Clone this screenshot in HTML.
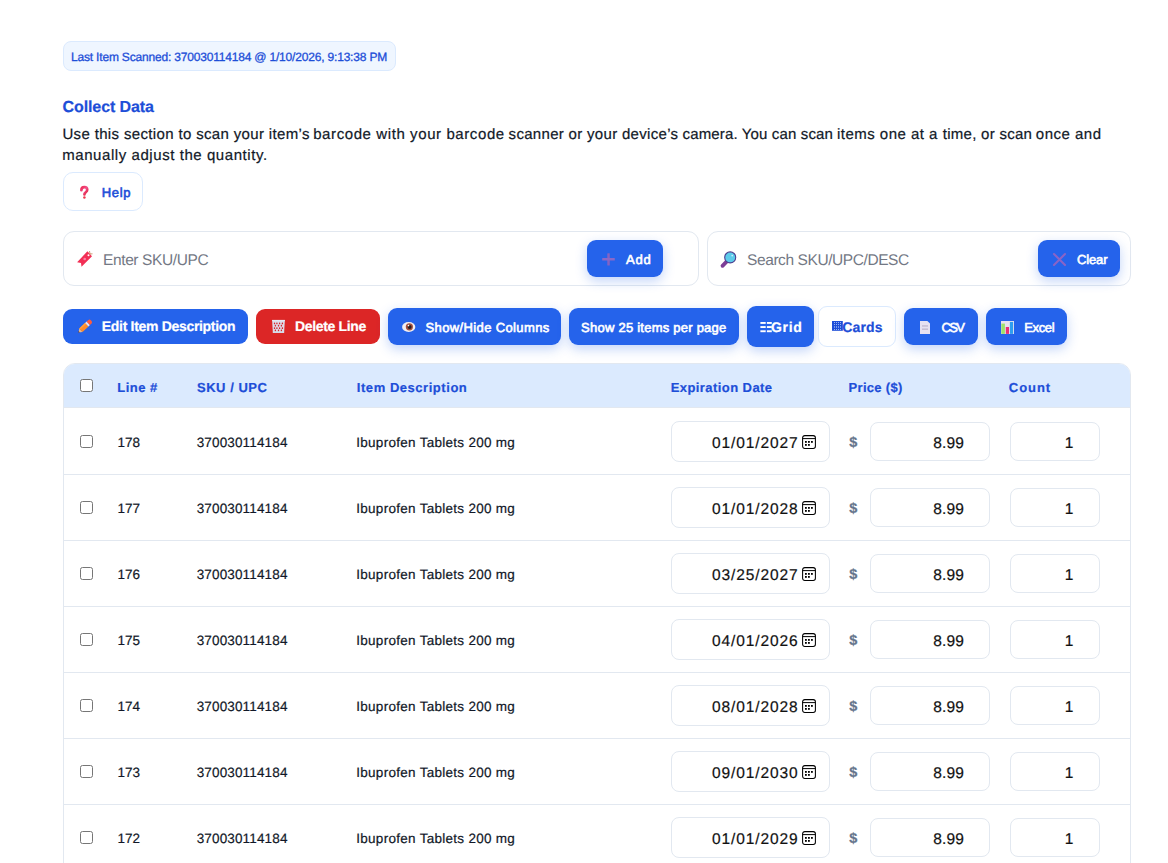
<!DOCTYPE html>
<html><head><meta charset="utf-8"><title>Collect Data</title>
<style>
*{box-sizing:border-box;margin:0;padding:0}
html,body{width:1168px;height:863px;overflow:hidden;background:#fff}
body{font-family:"Liberation Sans",sans-serif;position:relative;text-rendering:geometricPrecision}
.t{position:absolute;white-space:nowrap;line-height:1;-webkit-text-stroke-width:0.2px}
.b{position:absolute}
.i{position:absolute;overflow:visible}
</style></head><body>
<div class="b" style="left:63px;top:41px;width:333px;height:30px;border:1px solid #dbeafe;background:#eff6ff;border-radius:8px"></div>
<div class="t" style="left:71.00px;top:50.84px;font-size:12px;font-weight:normal;-webkit-text-stroke:0.3px #1d4ed8;letter-spacing:-0.185px;color:#1d4ed8;">Last Item Scanned: 370030114184 @ 1/10/2026, 9:13:38 PM</div>
<div class="t" style="left:62.50px;top:100.46px;font-size:16px;font-weight:bold;letter-spacing:-0.091px;color:#1d4ed8;">Collect Data</div>
<div class="t" style="left:62.40px;top:127.30px;font-size:15px;letter-spacing:0.351px;color:#111827">Use this section to scan your item’s</div>
<div class="t" style="left:313.20px;top:127.30px;font-size:15px;letter-spacing:0.592px;color:#111827">barcode with your barcode</div>
<div class="t" style="left:508.60px;top:127.30px;font-size:15px;letter-spacing:0.309px;color:#111827">scanner or your device’s</div>
<div class="t" style="left:682.60px;top:127.30px;font-size:15px;letter-spacing:0.142px;color:#111827">camera. You can scan</div>
<div class="t" style="left:837.00px;top:127.30px;font-size:15px;letter-spacing:0.477px;color:#111827">items one at a</div>
<div class="t" style="left:942.80px;top:127.30px;font-size:15px;letter-spacing:0.275px;color:#111827">time, or scan</div>
<div class="t" style="left:1035.80px;top:127.30px;font-size:15px;letter-spacing:0.500px;color:#111827">once and</div>
<div class="t" style="left:62.20px;top:148.30px;font-size:15px;letter-spacing:0.568px;color:#111827">manually adjust the quantity.</div>
<div class="b" style="left:63px;top:172px;width:80px;height:39px;border:1px solid #dbeafe;background:#fff;border-radius:10px"></div>
<svg class="i" style="left:78px;top:184px" width="12" height="16" viewBox="0 0 12 16"><defs><linearGradient id="qg" x1="0" y1="0" x2="1" y2="1"><stop offset="0" stop-color="#ef2f5a"/><stop offset="0.5" stop-color="#f0508a"/><stop offset="1" stop-color="#e01a35"/></linearGradient></defs>
<path d="M3.4 6.2 C3.4 3.9 4.9 3.2 6.4 3.2 C8.1 3.2 9.2 4.2 9.2 5.7 C9.2 7.3 8.1 7.8 7.2 8.8 C6.6 9.4 6.4 10 6.4 10.4" fill="none" stroke="url(#qg)" stroke-width="2.7" stroke-linecap="round"/>
<circle cx="6.4" cy="13.6" r="1.25" fill="#f03a50"/></svg>
<div class="t" style="left:101.75px;top:186.00px;font-size:13px;font-weight:normal;-webkit-text-stroke:0.6px #1d4ed8;letter-spacing:0.633px;color:#1d4ed8;">Help</div>
<div class="b" style="left:63px;top:231px;width:636px;height:55px;border:1px solid #e2e8f0;background:#fff;border-radius:11px"></div>
<svg class="i" style="left:74px;top:248px" width="22" height="22" viewBox="0 0 22 22"><path d="M13.4 3.3 L18 8.2 L7.5 18.8 L7.0 15.0 L3.1 14.3 Z" fill="#f22f55"/>
<circle cx="14.5" cy="7.3" r="1" fill="#fff"/><circle cx="10.7" cy="11" r="1.3" fill="#ff7fa6"/>
<path d="M15.5 3 L16 6 L18.5 5.8" fill="none" stroke="#c08050" stroke-width="0.8"/></svg>
<div class="t" style="left:103.05px;top:252.88px;font-size:15.5px;font-weight:normal;-webkit-text-stroke-width:0px;letter-spacing:-0.392px;color:#737884;">Enter SKU/UPC</div>
<div class="b" style="left:587px;top:240px;width:76px;height:37px;background:#2563eb;border-radius:9px;box-shadow:0 4px 12px rgba(37,99,235,0.28)"></div>
<svg class="i" style="left:600px;top:251px" width="17" height="17" viewBox="0 0 17 17"><rect x="7.3" y="2.2" width="2.5" height="12.4" rx="0.5" fill="#8563c2"/><rect x="2.2" y="6.9" width="12.6" height="2.6" rx="0.5" fill="#8a68c8"/></svg>
<div class="t" style="left:625.90px;top:253.00px;font-size:13px;font-weight:normal;-webkit-text-stroke:0.6px #fff;letter-spacing:0.900px;color:#fff;">Add</div>
<div class="b" style="left:707px;top:231px;width:424px;height:55px;border:1px solid #e2e8f0;background:#fff;border-radius:11px"></div>
<svg class="i" style="left:718px;top:249px" width="20" height="20" viewBox="0 0 20 20"><path d="M4.5 16.8 L8.6 12.7" stroke="#7d3e96" stroke-width="3.8" stroke-linecap="round"/>
<circle cx="12.2" cy="8.4" r="5.5" fill="#5ccbea" stroke="#4b3f8f" stroke-width="1.1"/>
<circle cx="14.2" cy="6.6" r="0.9" fill="#cdeefa"/></svg>
<div class="t" style="left:747.05px;top:252.88px;font-size:15.5px;font-weight:normal;-webkit-text-stroke-width:0px;letter-spacing:-0.417px;color:#737884;">Search SKU/UPC/DESC</div>
<div class="b" style="left:1038px;top:240px;width:82px;height:37px;background:#2563eb;border-radius:9px;box-shadow:0 4px 12px rgba(37,99,235,0.28)"></div>
<svg class="i" style="left:1051px;top:251px" width="17" height="17" viewBox="0 0 17 17"><path d="M3 3 L14 14 M14 3 L3 14" stroke="#8a64c6" stroke-width="2.1" stroke-linecap="round"/></svg>
<div class="t" style="left:1076.95px;top:253.00px;font-size:13px;font-weight:normal;-webkit-text-stroke:0.6px #fff;letter-spacing:-0.125px;color:#fff;">Clear</div>
<div class="b" style="left:63px;top:309px;width:185px;height:35px;background:#2563eb;border-radius:9px"></div>
<svg class="i" style="left:74px;top:314px" width="22" height="24" viewBox="0 0 22 24"><g transform="translate(4.3 18.6) rotate(-43)">
<path d="M0.3 0 L3.6 -2.4 L3.6 2.4 Z" fill="#e9b98e"/><path d="M0 0 L1.3 -0.95 L1.3 0.95 Z" fill="#4a2424"/>
<rect x="3.5" y="-2.4" width="8.2" height="4.8" fill="#ff8a2a"/><rect x="3.5" y="-2.4" width="8.2" height="1.5" fill="#ff9d40"/>
<rect x="11.6" y="-2.4" width="2.1" height="4.8" fill="#e6e3f3"/>
<path d="M13.6 -2.4 H16 A1.6 2.4 0 0 1 16 2.4 H13.6 Z" fill="#ff5b3d"/></g></svg>
<div class="t" style="left:101.85px;top:319.15px;font-size:14px;font-weight:bold;letter-spacing:-0.315px;color:#fff;">Edit Item Description</div>
<div class="b" style="left:256px;top:309px;width:124px;height:35px;background:#dc2626;border-radius:9px"></div>
<svg class="i" style="left:271px;top:319px" width="15" height="15" viewBox="0 0 15 15"><path d="M1.1 1 L13.9 1 L13.1 13.9 L1.9 13.9 Z" fill="#dcdbe8"/><g fill="#d8262c"><rect x="2.85" y="3.50" width="1.3" height="1.8" rx="0.5"/><rect x="5.25" y="3.50" width="1.3" height="1.8" rx="0.5"/><rect x="7.95" y="3.50" width="1.3" height="1.8" rx="0.5"/><rect x="10.75" y="3.50" width="1.3" height="1.8" rx="0.5"/><rect x="3.75" y="5.80" width="1.3" height="1.8" rx="0.5"/><rect x="6.85" y="5.80" width="1.3" height="1.8" rx="0.5"/><rect x="9.75" y="5.80" width="1.3" height="1.8" rx="0.5"/><rect x="2.85" y="8.30" width="1.3" height="1.8" rx="0.5"/><rect x="5.25" y="8.30" width="1.3" height="1.8" rx="0.5"/><rect x="7.95" y="8.30" width="1.3" height="1.8" rx="0.5"/><rect x="10.75" y="8.30" width="1.3" height="1.8" rx="0.5"/><rect x="3.75" y="10.50" width="1.3" height="1.8" rx="0.5"/><rect x="6.85" y="10.50" width="1.3" height="1.8" rx="0.5"/><rect x="9.75" y="10.50" width="1.3" height="1.8" rx="0.5"/></g><rect x="1.1" y="0.9" width="12.8" height="1.3" fill="#e4e9f3"/><rect x="1.9" y="12.6" width="11.2" height="1.3" fill="#d3d9e8"/></svg>
<div class="t" style="left:295.05px;top:319.15px;font-size:14px;font-weight:bold;letter-spacing:-0.350px;color:#fff;">Delete Line</div>
<div class="b" style="left:388px;top:308px;width:173px;height:37px;background:#2563eb;border-radius:9px;box-shadow:0 4px 12px rgba(37,99,235,0.28)"></div>
<svg class="i" style="left:400px;top:320px" width="18" height="14" viewBox="0 0 18 14"><ellipse cx="8.7" cy="7" rx="6.6" ry="5" fill="#f4eef0"/>
<circle cx="9.4" cy="6.8" r="3.6" fill="#a6503e"/><circle cx="9.6" cy="7.1" r="2" fill="#2a1f22"/><circle cx="8.5" cy="5.6" r="0.8" fill="#fff"/></svg>
<div class="t" style="left:425.55px;top:321.00px;font-size:13px;font-weight:normal;-webkit-text-stroke:0.6px #fff;letter-spacing:0.369px;color:#fff;">Show/Hide Columns</div>
<div class="b" style="left:569px;top:308px;width:170px;height:37px;background:#2563eb;border-radius:9px;box-shadow:0 4px 12px rgba(37,99,235,0.28)"></div>
<div class="t" style="left:581.10px;top:321.00px;font-size:13px;font-weight:normal;-webkit-text-stroke:0.6px #fff;letter-spacing:0.238px;color:#fff;">Show 25 items per page</div>
<div class="b" style="left:747px;top:306px;width:67px;height:41px;background:#2563eb;border-radius:9px;box-shadow:0 4px 12px rgba(37,99,235,0.28)"></div>
<svg class="i" style="left:759px;top:320px" width="14" height="14" viewBox="0 0 14 14"><g fill="#fff"><rect x="1.4" y="2" width="5.3" height="1.9"/><rect x="7.9" y="2" width="4.9" height="1.9"/><rect x="1.4" y="6.1" width="5.3" height="1.9"/><rect x="7.9" y="6.1" width="4.9" height="1.9"/><rect x="1.4" y="10.3" width="5.3" height="1.9"/><rect x="7.9" y="10.3" width="4.9" height="1.9"/></g></svg>
<div class="t" style="left:771.00px;top:320.15px;font-size:14px;font-weight:bold;letter-spacing:0.667px;color:#fff;">Grid</div>
<div class="b" style="left:818px;top:306px;width:78px;height:41px;border:1px solid #dbeafe;background:#fff;border-radius:9px"></div>
<svg class="i" style="left:831px;top:320px" width="13" height="12" viewBox="0 0 13 12"><rect x="1" y="1" width="10.8" height="9.8" fill="#1d4ed8"/><g fill="#9cb4f2"><rect x="3" y="2" width="1" height="1"/><rect x="5" y="2" width="1" height="1"/><rect x="7" y="2" width="1" height="1"/><rect x="9" y="2" width="1" height="1"/><rect x="3" y="4" width="1" height="1"/><rect x="5" y="4" width="1" height="1"/><rect x="7" y="4" width="1" height="1"/><rect x="9" y="4" width="1" height="1"/><rect x="3" y="6.3" width="1" height="1.4"/><rect x="5" y="6.3" width="1" height="1.4"/><rect x="7" y="6.3" width="1" height="1.4"/><rect x="9" y="6.3" width="1" height="1.4"/><rect x="3" y="9" width="1" height="1"/><rect x="5" y="9" width="1" height="1"/><rect x="7" y="9" width="1" height="1"/><rect x="9" y="9" width="1" height="1"/></g></svg>
<div class="t" style="left:842.25px;top:320.15px;font-size:14px;font-weight:bold;letter-spacing:0.125px;color:#1d4ed8;">Cards</div>
<div class="b" style="left:904px;top:308px;width:74px;height:37px;background:#2563eb;border-radius:9px;box-shadow:0 4px 12px rgba(37,99,235,0.28)"></div>
<svg class="i" style="left:919px;top:320px" width="13" height="15" viewBox="0 0 13 15"><path d="M1 1 L8.4 1 L11 3.6 L11 14 L1 14 Z" fill="#e7e1f1"/>
<rect x="3" y="5.4" width="6" height="1.1" fill="#b9b0c8"/><rect x="3" y="8.6" width="6" height="1.1" fill="#b9b0c8"/></svg>
<div class="t" style="left:941.40px;top:321.00px;font-size:13px;font-weight:normal;-webkit-text-stroke:0.6px #fff;letter-spacing:-1.600px;color:#fff;">CSV</div>
<div class="b" style="left:986px;top:308px;width:81px;height:37px;background:#2563eb;border-radius:9px;box-shadow:0 4px 12px rgba(37,99,235,0.28)"></div>
<svg class="i" style="left:1000px;top:320px" width="15" height="15" viewBox="0 0 15 15"><rect x="1" y="1" width="13" height="13" fill="#e7e2ee"/>
<rect x="1.3" y="3.6" width="3.6" height="10.3" fill="#9ee36a"/><rect x="5.8" y="7" width="3.2" height="6.9" fill="#ea2e74"/><rect x="9.9" y="1.9" width="3.2" height="12" fill="#2f9ef0"/></svg>
<div class="t" style="left:1024.15px;top:321.00px;font-size:13px;font-weight:normal;-webkit-text-stroke:0.6px #fff;letter-spacing:-0.325px;color:#fff;">Excel</div>
<div class="b" style="left:63px;top:363px;width:1068px;height:520px;border:1px solid #e2e8f0;border-radius:12px;overflow:hidden;background:#fff"><div style="position:absolute;left:0;top:0;width:100%;height:44px;background:#dbeafe;border-bottom:1px solid #e2e8f0"></div></div>
<div class="b" style="left:80px;top:379px;width:13px;height:13px;border:1px solid #767676;border-radius:2.5px;background:#fff"></div>
<div class="t" style="left:117.35px;top:381.00px;font-size:13px;font-weight:bold;letter-spacing:0.460px;color:#1d4ed8;">Line #</div>
<div class="t" style="left:196.95px;top:381.00px;font-size:13px;font-weight:bold;letter-spacing:0.538px;color:#1d4ed8;">SKU / UPC</div>
<div class="t" style="left:356.85px;top:381.00px;font-size:13px;font-weight:bold;letter-spacing:0.540px;color:#1d4ed8;">Item Description</div>
<div class="t" style="left:670.65px;top:381.00px;font-size:13px;font-weight:bold;letter-spacing:0.436px;color:#1d4ed8;">Expiration Date</div>
<div class="t" style="left:848.50px;top:381.00px;font-size:13px;font-weight:bold;letter-spacing:0.325px;color:#1d4ed8;">Price ($)</div>
<div class="t" style="left:1008.85px;top:381.00px;font-size:13px;font-weight:bold;letter-spacing:0.925px;color:#1d4ed8;">Count</div>
<div class="b" style="left:80px;top:435px;width:13px;height:13px;border:1px solid #767676;border-radius:2.5px;background:#fff"></div>
<div class="t" style="left:117.40px;top:435.57px;font-size:13.5px;font-weight:normal;letter-spacing:0.000px;color:#111827;">178</div>
<div class="t" style="left:196.65px;top:435.57px;font-size:13.5px;font-weight:normal;letter-spacing:0.155px;color:#111827;">370030114184</div>
<div class="t" style="left:356.25px;top:435.57px;font-size:13.5px;font-weight:normal;letter-spacing:0.283px;color:#111827;">Ibuprofen Tablets 200 mg</div>
<div class="b" style="left:671px;top:421px;width:159px;height:41px;border:1px solid #e2e8f0;border-radius:8px;background:#fff"></div>
<div class="t" style="left:711.90px;top:435.58px;font-size:15.5px;font-weight:normal;letter-spacing:0.911px;color:#111;">01/01/2027</div>
<svg class="i" style="left:802px;top:435px" width="14" height="14" viewBox="0 0 14 14"><rect x="0.6" y="0.6" width="12.8" height="12.8" rx="2.2" fill="none" stroke="#000" stroke-width="1.05"/><path d="M0.6 3.6 H13.4" stroke="#000" stroke-width="1"/>
<g fill="#000"><rect x="3" y="6" width="1.8" height="1.8"/><rect x="6" y="6" width="1.8" height="1.8"/><rect x="9" y="6" width="1.8" height="1.8"/><rect x="3" y="9" width="1.8" height="1.8"/><rect x="6" y="9" width="1.8" height="1.8"/></g></svg>
<div class="t" style="left:849.3px;top:435.83px;font-size:14.5px;font-weight:bold;color:#64748b">$</div>
<div class="b" style="left:870px;top:422px;width:120px;height:39px;border:1px solid #e2e8f0;border-radius:8px;background:#fff"></div>
<div class="t" style="left:933.20px;top:435.58px;font-size:15.5px;font-weight:normal;letter-spacing:0.133px;color:#111;">8.99</div>
<div class="b" style="left:1010px;top:422px;width:90px;height:39px;border:1px solid #e2e8f0;border-radius:8px;background:#fff"></div>
<div class="t" style="left:1064.75px;top:435.58px;font-size:15.5px;font-weight:normal;letter-spacing:0.000px;color:#111;">1</div>
<div class="b" style="left:64px;top:474px;width:1066px;height:1px;background:#e2e8f0"></div>
<div class="b" style="left:80px;top:501px;width:13px;height:13px;border:1px solid #767676;border-radius:2.5px;background:#fff"></div>
<div class="t" style="left:117.40px;top:501.57px;font-size:13.5px;font-weight:normal;letter-spacing:0.000px;color:#111827;">177</div>
<div class="t" style="left:196.65px;top:501.57px;font-size:13.5px;font-weight:normal;letter-spacing:0.155px;color:#111827;">370030114184</div>
<div class="t" style="left:356.25px;top:501.57px;font-size:13.5px;font-weight:normal;letter-spacing:0.283px;color:#111827;">Ibuprofen Tablets 200 mg</div>
<div class="b" style="left:671px;top:487px;width:159px;height:41px;border:1px solid #e2e8f0;border-radius:8px;background:#fff"></div>
<div class="t" style="left:711.90px;top:501.58px;font-size:15.5px;font-weight:normal;letter-spacing:0.911px;color:#111;">01/01/2028</div>
<svg class="i" style="left:802px;top:501px" width="14" height="14" viewBox="0 0 14 14"><rect x="0.6" y="0.6" width="12.8" height="12.8" rx="2.2" fill="none" stroke="#000" stroke-width="1.05"/><path d="M0.6 3.6 H13.4" stroke="#000" stroke-width="1"/>
<g fill="#000"><rect x="3" y="6" width="1.8" height="1.8"/><rect x="6" y="6" width="1.8" height="1.8"/><rect x="9" y="6" width="1.8" height="1.8"/><rect x="3" y="9" width="1.8" height="1.8"/><rect x="6" y="9" width="1.8" height="1.8"/></g></svg>
<div class="t" style="left:849.3px;top:501.83px;font-size:14.5px;font-weight:bold;color:#64748b">$</div>
<div class="b" style="left:870px;top:488px;width:120px;height:39px;border:1px solid #e2e8f0;border-radius:8px;background:#fff"></div>
<div class="t" style="left:933.20px;top:501.58px;font-size:15.5px;font-weight:normal;letter-spacing:0.133px;color:#111;">8.99</div>
<div class="b" style="left:1010px;top:488px;width:90px;height:39px;border:1px solid #e2e8f0;border-radius:8px;background:#fff"></div>
<div class="t" style="left:1064.75px;top:501.58px;font-size:15.5px;font-weight:normal;letter-spacing:0.000px;color:#111;">1</div>
<div class="b" style="left:64px;top:540px;width:1066px;height:1px;background:#e2e8f0"></div>
<div class="b" style="left:80px;top:567px;width:13px;height:13px;border:1px solid #767676;border-radius:2.5px;background:#fff"></div>
<div class="t" style="left:117.40px;top:567.57px;font-size:13.5px;font-weight:normal;letter-spacing:0.000px;color:#111827;">176</div>
<div class="t" style="left:196.65px;top:567.57px;font-size:13.5px;font-weight:normal;letter-spacing:0.155px;color:#111827;">370030114184</div>
<div class="t" style="left:356.25px;top:567.57px;font-size:13.5px;font-weight:normal;letter-spacing:0.283px;color:#111827;">Ibuprofen Tablets 200 mg</div>
<div class="b" style="left:671px;top:553px;width:159px;height:41px;border:1px solid #e2e8f0;border-radius:8px;background:#fff"></div>
<div class="t" style="left:711.90px;top:567.58px;font-size:15.5px;font-weight:normal;letter-spacing:0.911px;color:#111;">03/25/2027</div>
<svg class="i" style="left:802px;top:567px" width="14" height="14" viewBox="0 0 14 14"><rect x="0.6" y="0.6" width="12.8" height="12.8" rx="2.2" fill="none" stroke="#000" stroke-width="1.05"/><path d="M0.6 3.6 H13.4" stroke="#000" stroke-width="1"/>
<g fill="#000"><rect x="3" y="6" width="1.8" height="1.8"/><rect x="6" y="6" width="1.8" height="1.8"/><rect x="9" y="6" width="1.8" height="1.8"/><rect x="3" y="9" width="1.8" height="1.8"/><rect x="6" y="9" width="1.8" height="1.8"/></g></svg>
<div class="t" style="left:849.3px;top:567.83px;font-size:14.5px;font-weight:bold;color:#64748b">$</div>
<div class="b" style="left:870px;top:554px;width:120px;height:39px;border:1px solid #e2e8f0;border-radius:8px;background:#fff"></div>
<div class="t" style="left:933.20px;top:567.58px;font-size:15.5px;font-weight:normal;letter-spacing:0.133px;color:#111;">8.99</div>
<div class="b" style="left:1010px;top:554px;width:90px;height:39px;border:1px solid #e2e8f0;border-radius:8px;background:#fff"></div>
<div class="t" style="left:1064.75px;top:567.58px;font-size:15.5px;font-weight:normal;letter-spacing:0.000px;color:#111;">1</div>
<div class="b" style="left:64px;top:606px;width:1066px;height:1px;background:#e2e8f0"></div>
<div class="b" style="left:80px;top:633px;width:13px;height:13px;border:1px solid #767676;border-radius:2.5px;background:#fff"></div>
<div class="t" style="left:117.40px;top:633.57px;font-size:13.5px;font-weight:normal;letter-spacing:0.000px;color:#111827;">175</div>
<div class="t" style="left:196.65px;top:633.57px;font-size:13.5px;font-weight:normal;letter-spacing:0.155px;color:#111827;">370030114184</div>
<div class="t" style="left:356.25px;top:633.57px;font-size:13.5px;font-weight:normal;letter-spacing:0.283px;color:#111827;">Ibuprofen Tablets 200 mg</div>
<div class="b" style="left:671px;top:619px;width:159px;height:41px;border:1px solid #e2e8f0;border-radius:8px;background:#fff"></div>
<div class="t" style="left:711.90px;top:633.58px;font-size:15.5px;font-weight:normal;letter-spacing:0.911px;color:#111;">04/01/2026</div>
<svg class="i" style="left:802px;top:633px" width="14" height="14" viewBox="0 0 14 14"><rect x="0.6" y="0.6" width="12.8" height="12.8" rx="2.2" fill="none" stroke="#000" stroke-width="1.05"/><path d="M0.6 3.6 H13.4" stroke="#000" stroke-width="1"/>
<g fill="#000"><rect x="3" y="6" width="1.8" height="1.8"/><rect x="6" y="6" width="1.8" height="1.8"/><rect x="9" y="6" width="1.8" height="1.8"/><rect x="3" y="9" width="1.8" height="1.8"/><rect x="6" y="9" width="1.8" height="1.8"/></g></svg>
<div class="t" style="left:849.3px;top:633.83px;font-size:14.5px;font-weight:bold;color:#64748b">$</div>
<div class="b" style="left:870px;top:620px;width:120px;height:39px;border:1px solid #e2e8f0;border-radius:8px;background:#fff"></div>
<div class="t" style="left:933.20px;top:633.58px;font-size:15.5px;font-weight:normal;letter-spacing:0.133px;color:#111;">8.99</div>
<div class="b" style="left:1010px;top:620px;width:90px;height:39px;border:1px solid #e2e8f0;border-radius:8px;background:#fff"></div>
<div class="t" style="left:1064.75px;top:633.58px;font-size:15.5px;font-weight:normal;letter-spacing:0.000px;color:#111;">1</div>
<div class="b" style="left:64px;top:672px;width:1066px;height:1px;background:#e2e8f0"></div>
<div class="b" style="left:80px;top:699px;width:13px;height:13px;border:1px solid #767676;border-radius:2.5px;background:#fff"></div>
<div class="t" style="left:117.40px;top:699.57px;font-size:13.5px;font-weight:normal;letter-spacing:0.000px;color:#111827;">174</div>
<div class="t" style="left:196.65px;top:699.57px;font-size:13.5px;font-weight:normal;letter-spacing:0.155px;color:#111827;">370030114184</div>
<div class="t" style="left:356.25px;top:699.57px;font-size:13.5px;font-weight:normal;letter-spacing:0.283px;color:#111827;">Ibuprofen Tablets 200 mg</div>
<div class="b" style="left:671px;top:685px;width:159px;height:41px;border:1px solid #e2e8f0;border-radius:8px;background:#fff"></div>
<div class="t" style="left:711.90px;top:699.58px;font-size:15.5px;font-weight:normal;letter-spacing:0.911px;color:#111;">08/01/2028</div>
<svg class="i" style="left:802px;top:699px" width="14" height="14" viewBox="0 0 14 14"><rect x="0.6" y="0.6" width="12.8" height="12.8" rx="2.2" fill="none" stroke="#000" stroke-width="1.05"/><path d="M0.6 3.6 H13.4" stroke="#000" stroke-width="1"/>
<g fill="#000"><rect x="3" y="6" width="1.8" height="1.8"/><rect x="6" y="6" width="1.8" height="1.8"/><rect x="9" y="6" width="1.8" height="1.8"/><rect x="3" y="9" width="1.8" height="1.8"/><rect x="6" y="9" width="1.8" height="1.8"/></g></svg>
<div class="t" style="left:849.3px;top:699.83px;font-size:14.5px;font-weight:bold;color:#64748b">$</div>
<div class="b" style="left:870px;top:686px;width:120px;height:39px;border:1px solid #e2e8f0;border-radius:8px;background:#fff"></div>
<div class="t" style="left:933.20px;top:699.58px;font-size:15.5px;font-weight:normal;letter-spacing:0.133px;color:#111;">8.99</div>
<div class="b" style="left:1010px;top:686px;width:90px;height:39px;border:1px solid #e2e8f0;border-radius:8px;background:#fff"></div>
<div class="t" style="left:1064.75px;top:699.58px;font-size:15.5px;font-weight:normal;letter-spacing:0.000px;color:#111;">1</div>
<div class="b" style="left:64px;top:738px;width:1066px;height:1px;background:#e2e8f0"></div>
<div class="b" style="left:80px;top:765px;width:13px;height:13px;border:1px solid #767676;border-radius:2.5px;background:#fff"></div>
<div class="t" style="left:117.40px;top:765.57px;font-size:13.5px;font-weight:normal;letter-spacing:0.000px;color:#111827;">173</div>
<div class="t" style="left:196.65px;top:765.57px;font-size:13.5px;font-weight:normal;letter-spacing:0.155px;color:#111827;">370030114184</div>
<div class="t" style="left:356.25px;top:765.57px;font-size:13.5px;font-weight:normal;letter-spacing:0.283px;color:#111827;">Ibuprofen Tablets 200 mg</div>
<div class="b" style="left:671px;top:751px;width:159px;height:41px;border:1px solid #e2e8f0;border-radius:8px;background:#fff"></div>
<div class="t" style="left:711.90px;top:765.58px;font-size:15.5px;font-weight:normal;letter-spacing:0.911px;color:#111;">09/01/2030</div>
<svg class="i" style="left:802px;top:765px" width="14" height="14" viewBox="0 0 14 14"><rect x="0.6" y="0.6" width="12.8" height="12.8" rx="2.2" fill="none" stroke="#000" stroke-width="1.05"/><path d="M0.6 3.6 H13.4" stroke="#000" stroke-width="1"/>
<g fill="#000"><rect x="3" y="6" width="1.8" height="1.8"/><rect x="6" y="6" width="1.8" height="1.8"/><rect x="9" y="6" width="1.8" height="1.8"/><rect x="3" y="9" width="1.8" height="1.8"/><rect x="6" y="9" width="1.8" height="1.8"/></g></svg>
<div class="t" style="left:849.3px;top:765.83px;font-size:14.5px;font-weight:bold;color:#64748b">$</div>
<div class="b" style="left:870px;top:752px;width:120px;height:39px;border:1px solid #e2e8f0;border-radius:8px;background:#fff"></div>
<div class="t" style="left:933.20px;top:765.58px;font-size:15.5px;font-weight:normal;letter-spacing:0.133px;color:#111;">8.99</div>
<div class="b" style="left:1010px;top:752px;width:90px;height:39px;border:1px solid #e2e8f0;border-radius:8px;background:#fff"></div>
<div class="t" style="left:1064.75px;top:765.58px;font-size:15.5px;font-weight:normal;letter-spacing:0.000px;color:#111;">1</div>
<div class="b" style="left:64px;top:804px;width:1066px;height:1px;background:#e2e8f0"></div>
<div class="b" style="left:80px;top:831px;width:13px;height:13px;border:1px solid #767676;border-radius:2.5px;background:#fff"></div>
<div class="t" style="left:117.40px;top:831.57px;font-size:13.5px;font-weight:normal;letter-spacing:0.000px;color:#111827;">172</div>
<div class="t" style="left:196.65px;top:831.57px;font-size:13.5px;font-weight:normal;letter-spacing:0.155px;color:#111827;">370030114184</div>
<div class="t" style="left:356.25px;top:831.57px;font-size:13.5px;font-weight:normal;letter-spacing:0.283px;color:#111827;">Ibuprofen Tablets 200 mg</div>
<div class="b" style="left:671px;top:817px;width:159px;height:41px;border:1px solid #e2e8f0;border-radius:8px;background:#fff"></div>
<div class="t" style="left:711.90px;top:831.58px;font-size:15.5px;font-weight:normal;letter-spacing:0.911px;color:#111;">01/01/2029</div>
<svg class="i" style="left:802px;top:831px" width="14" height="14" viewBox="0 0 14 14"><rect x="0.6" y="0.6" width="12.8" height="12.8" rx="2.2" fill="none" stroke="#000" stroke-width="1.05"/><path d="M0.6 3.6 H13.4" stroke="#000" stroke-width="1"/>
<g fill="#000"><rect x="3" y="6" width="1.8" height="1.8"/><rect x="6" y="6" width="1.8" height="1.8"/><rect x="9" y="6" width="1.8" height="1.8"/><rect x="3" y="9" width="1.8" height="1.8"/><rect x="6" y="9" width="1.8" height="1.8"/></g></svg>
<div class="t" style="left:849.3px;top:831.83px;font-size:14.5px;font-weight:bold;color:#64748b">$</div>
<div class="b" style="left:870px;top:818px;width:120px;height:39px;border:1px solid #e2e8f0;border-radius:8px;background:#fff"></div>
<div class="t" style="left:933.20px;top:831.58px;font-size:15.5px;font-weight:normal;letter-spacing:0.133px;color:#111;">8.99</div>
<div class="b" style="left:1010px;top:818px;width:90px;height:39px;border:1px solid #e2e8f0;border-radius:8px;background:#fff"></div>
<div class="t" style="left:1064.75px;top:831.58px;font-size:15.5px;font-weight:normal;letter-spacing:0.000px;color:#111;">1</div>
</body></html>
